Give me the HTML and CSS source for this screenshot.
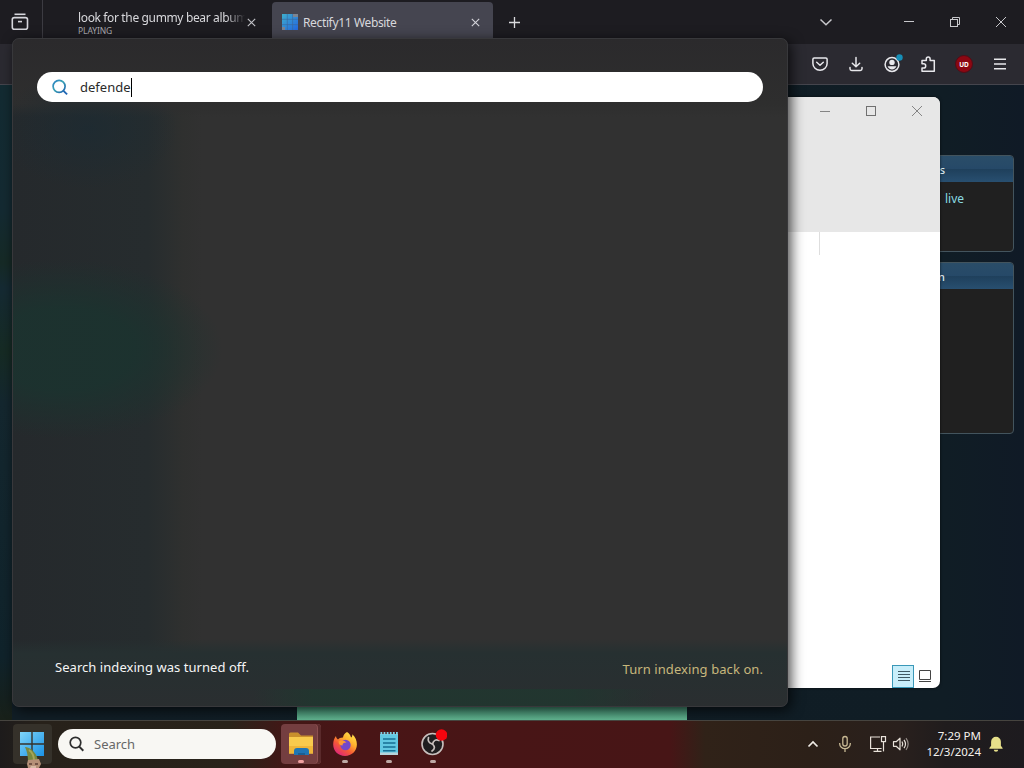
FILE: index.html
```
<!DOCTYPE html>
<html lang="en">
<head>
<meta charset="utf-8">
<title>Desktop</title>
<link rel="stylesheet" href="styles.css">
</head>
<body>
<main class="desktop">
  <section class="browser">
    <header class="tabs">
      <div class="history"><svg width="18" height="18" viewBox="0 0 18 18" fill="none" stroke="#d6d6dc" stroke-width="1.6"><path d="M3.5 1.3h11"/><rect x="1.3" y="4.6" width="15.2" height="11.6" rx="2"/><path d="M7 8.6h4"/></svg></div>
      <div class="tab media"><div class="tab-text"><span class="tab-title fade">look for the gummy bear album</span><span class="playing">PLAYING</span></div>
        <svg class="close" width="9" height="9" viewBox="0 0 9 9"><path d="M.8.8l7.4 7.4M8.2.8L.8 8.2" stroke="#c4c4ca" stroke-width="1.1"/></svg></div>
      <div class="tab active">
        <svg class="favicon" width="16" height="16" viewBox="0 0 16 16"><defs><linearGradient id="fav" x1="0" y1="0" x2="1" y2="1"><stop offset="0" stop-color="#3faecb"/><stop offset="1" stop-color="#2467e0"/></linearGradient></defs><rect width="16" height="16" fill="url(#fav)"/><path d="M0 5.3h16M0 10.6h16M5.3 0v16M10.6 0v16" stroke="#3d6698" stroke-width=".6"/><path d="M11 0h5v3h-5zM0 13h3v3H0z" fill="#7b8491"/></svg>
        <span class="tab-title">Rectify11 Website</span>
        <svg class="close" width="9" height="9" viewBox="0 0 9 9"><path d="M.8.8l7.4 7.4M8.2.8L.8 8.2" stroke="#d4d4da" stroke-width="1.1"/></svg></div>
      <svg class="plus" width="13" height="13" viewBox="0 0 13 13"><path d="M6.500 1v11M1 6.500h11" stroke="#dadade" stroke-width="1.300"/></svg>
      <div class="window-buttons">
        <svg width="14" height="14" viewBox="0 0 14 14" fill="none" stroke="#c8c8cc" stroke-width="1.500"><path d="M1.500 4.500L7 9.800l5.500-5.300"/></svg>
        <svg width="14" height="14" viewBox="0 0 14 14"><path d="M2 6.500h10" stroke="#c8c8cc"/></svg>
        <svg width="14" height="14" viewBox="0 0 14 14" fill="none" stroke="#c8c8cc"><rect x="2.500" y="4.500" width="7" height="7"/><path d="M4.500 4.500v-2h7v7h-2"/></svg>
        <svg width="14" height="14" viewBox="0 0 14 14"><path d="M2 2l10 10M12 2L2 12" stroke="#c8c8cc"/></svg>
      </div>
    </header>
    <nav class="toolbar">
      <svg width="18" height="18" viewBox="0 0 18 18" fill="none" stroke="#e8e8ec" stroke-width="1.500" stroke-linecap="round" stroke-linejoin="round"><path d="M3.200 3h11.600a1.300 1.300 0 0 1 1.300 1.300v4.200a7.100 6.700 0 0 1-14.200 0V4.300A1.300 1.300 0 0 1 3.200 3z"/><path d="M5.700 7.200L9 10.200l3.300-3"/></svg>
      <svg width="18" height="18" viewBox="0 0 18 18" fill="none" stroke="#e8e8ec" stroke-width="1.500" stroke-linecap="round" stroke-linejoin="round"><path d="M9 2.500v9M5.300 8.200L9 11.700l3.700-3.500M3 12.500v1.300a1.700 1.700 0 0 0 1.700 1.700h8.600a1.700 1.700 0 0 0 1.700-1.700v-1.300"/></svg>
      <svg class="account" width="18" height="18" viewBox="0 0 18 18"><circle cx="9" cy="9.500" r="6.900" fill="none" stroke="#e8e8ec" stroke-width="1.500"/><circle cx="9" cy="7.400" r="2.700" fill="#e8e8ec"/><path d="M4.600 11.300h8.800c-.6 2-2.400 3.200-4.400 3.200s-3.800-1.200-4.400-3.200z" fill="#e8e8ec"/><circle cx="16.500" cy="2.500" r="3.200" fill="#168fb8"/></svg>
      <svg width="18" height="18" viewBox="0 0 18 18" fill="none" stroke="#e8e8ec" stroke-width="1.500" stroke-linejoin="round"><path d="M3 16.300V13h1.600a2.100 2.100 0 0 0 0-4.200H3V5.500h4.300V4a1.900 1.900 0 0 1 3.800 0v1.500h4.200v10.800z"/></svg>
      <span class="blocker">UD</span>
      <svg width="18" height="18" viewBox="0 0 18 18"><path d="M3 4.300h12M3 9h12M3 13.700h12" stroke="#e8e8ec" stroke-width="1.400"/></svg>
    </nav>
    <div class="page">
      <aside class="side">
        <article class="card"><h2>s</h2><p>live</p></article>
        <article class="card tall"><h2>n</h2></article>
      </aside>
      <div class="banner"></div>
    </div>
  </section>

  <section class="explorer">
    <header class="explorer-head">
      <svg width="12" height="12" viewBox="0 0 12 12"><path d="M1 6.500h10" stroke="#858585"/></svg>
      <svg width="12" height="12" viewBox="0 0 12 12"><rect x="1.500" y="1.500" width="9" height="9" fill="none" stroke="#707070"/></svg>
      <svg width="12" height="12" viewBox="0 0 12 12"><path d="M1 1l10 10M11 1L1 11" stroke="#858585"/></svg>
    </header>
    <div class="explorer-body"><i class="divider"></i></div>
    <footer class="views">
      <span class="view-on"><svg width="14" height="12" viewBox="0 0 14 12"><path d="M1 1.500h12M1 4.500h12M1 7.500h12M1 10.500h12" stroke="#3f5964"/></svg></span>
      <svg width="14" height="14" viewBox="0 0 14 14"><path d="M1.500 1.500h11v9h-11zM1 12.500h12" fill="none" stroke="#444"/></svg>
    </footer>
  </section>

  <section class="start">
    <div class="query">
      <svg width="17" height="17" viewBox="0 0 17 17" fill="none"><defs><linearGradient id="lens" x1="0" y1="0" x2="1" y2="1"><stop offset="0" stop-color="#2a7fc4"/><stop offset=".45" stop-color="#3aa3b4"/><stop offset="1" stop-color="#1d5fae"/></linearGradient></defs><circle cx="7.100" cy="7.300" r="6" stroke="url(#lens)" stroke-width="1.700"/><path d="M11.500 11.800l3.600 3.600" stroke="#1f66b4" stroke-width="1.800"/></svg>
      <span class="typed">defende</span>
    </div>
    <footer class="notice"><span class="off">Search indexing was turned off.</span><a class="turn-on">Turn indexing back on.</a></footer>
  </section>

  <nav class="taskbar">
    <div class="start-button"><svg width="24" height="24" viewBox="0 0 24 24"><defs><linearGradient id="win" x1="0" y1="0" x2="1" y2="1"><stop offset="0" stop-color="#7fd5f8"/><stop offset="1" stop-color="#1b92e6"/></linearGradient></defs><path d="M0 0h11.300v11.300H0zM12.700 0H24v11.300H12.700zM0 12.700h11.300V24H0zM12.700 12.700H24V24H12.700z" fill="url(#win)"/></svg>
      <svg class="pointer" width="17" height="22" viewBox="0 0 17 22"><path d="M0 1c4 0 10 4 12 10l1 4-10 1c0-6-1-11-3-15z" fill="#78873f"/><path d="M4 4c3 2 5 6 5 11" stroke="#a5a558" stroke-width="2" fill="none"/><path d="M3 14l11-1 2 5-2 4H3l-1-4z" fill="#b59078"/><path d="M4 18h3M10 18h3" stroke="#5e3f37" stroke-width="1.500"/><path d="M6 20h5v2H5z" fill="#d6b9a4"/></svg></div>
    <div class="task-search"><svg width="16" height="16" viewBox="0 0 16 16" fill="none" stroke="#2e2e2e"><circle cx="6.500" cy="6.600" r="5.300" stroke-width="1.700"/><path d="M10.300 10.600l4 4.200" stroke-width="2"/></svg><span>Search</span></div>
    <div class="apps">
      <div class="app current"><svg width="28" height="28" viewBox="0 0 28 28"><path d="M2 5q0-1.500 1.500-1.500H11l3 3h12V12H2z" fill="#c98f2c"/><path d="M2 8h24v16.500H2z" fill="#f8ca4d"/><path d="M2 17h24v7.500H2z" fill="#efb538"/><path d="M7 26v-4q0-3 3-3h9q3 0 3 3v4z" fill="#2075b4"/><path d="M11 26v-2h7v2z" fill="#1a5f93"/></svg></div>
      <div class="app"><svg width="28" height="28" viewBox="0 0 28 28"><defs><linearGradient id="fox" x1=".85" y1=".05" x2=".2" y2=".95"><stop offset="0" stop-color="#ffe34c"/><stop offset=".35" stop-color="#ffb12e"/><stop offset=".65" stop-color="#f75b35"/><stop offset="1" stop-color="#df257c"/></linearGradient></defs><path d="M16 3c2 1 3.500 3 4 5.500 1.300-.8 1.500-2 1.300-3.300 3.200 3 4.600 6.500 4.600 10.300C25.900 22 20.700 27 14 27S2.200 22 2.200 15.500c0-3.500 1-6.500 2.800-8.500 0 1.500.8 2.700 2 3.500C8 9.300 9.500 8.500 12 8.500c.3-2.300 1.800-4.500 4-5.500z" fill="url(#fox)"/><circle cx="14.500" cy="16" r="5.200" fill="#7548c9"/><path d="M7.500 12.500c3-2 6-1 8 1-3 0-4 1-4 3-2 0-4-1-4-4z" fill="#ff9933"/></svg></div>
      <div class="app"><svg width="28" height="28" viewBox="0 0 28 28"><path d="M5 5h18v21H5z" fill="#62c8e2"/><path d="M5 23.500h18V26H5z" fill="#b7d3da"/><path d="M5.500 4.500h17.500" stroke="#7fd0e5" stroke-width="3" stroke-dasharray="1.800 1.300"/><path d="M8 10h12.500M8 14h12.500M8 18h12.500M8 21.800h12.500" stroke="#176f94" stroke-width="1.500"/></svg></div>
      <div class="app"><svg width="28" height="28" viewBox="0 0 28 28"><circle cx="13.500" cy="15" r="10.500" fill="#201e20" stroke="#c8bfbd" stroke-width="1.600"/><g fill="none" stroke="#c8bfbd" stroke-width="1.700" stroke-linecap="round"><path d="M13.500 15Q8 13.500 9.500 8.500"/><path d="M13.500 15q1.500-5.500 6.500-3.500"/><path d="M13.500 15q4 4-.5 7"/></g><circle cx="22.500" cy="6" r="5.800" fill="#f5050e"/></svg></div>
    </div>
    <div class="tray">
      <svg class="chevron" width="12" height="12" viewBox="0 0 12 12"><path d="M1.500 8.500L6 4l4.500 4.500" fill="none" stroke="#f0ece6" stroke-width="1.700"/></svg>
      <svg class="mic" width="14" height="18" viewBox="0 0 14 18" fill="none" stroke="#c8b994" stroke-width="1.300"><rect x="4.800" y="1.500" width="4.400" height="9.500" rx="2.200"/><path d="M1.700 8v.7a5.300 5 0 0 0 10.600 0V8M7 13.500V17"/></svg>
      <svg class="network" width="18" height="18" viewBox="0 0 18 18" fill="none" stroke="#e9e2da" stroke-width="1.200"><path d="M11 2H1.600v11.500h11M8.500 13.500v2.800M4.500 16.400h8"/><rect x="12.500" y="1.600" width="4" height="5"/><path d="M14.500 6.600v9.800"/></svg>
      <svg class="sound" width="18" height="16" viewBox="0 0 18 16" fill="none" stroke="#e9e2da" stroke-width="1.200" stroke-linejoin="round"><path d="M1.500 5.700h2.700L8 2.200v11.600l-3.800-3.500H1.500zM10 5.500q1.500 2.500 0 5M12 3.800q3 4.200 0 8.400"/><path d="M14 2.200q4.300 5.800 0 11.600" opacity=".55"/></svg>
      <div class="clock"><span>7:29 PM</span><span>12/3/2024</span></div>
      <svg class="bell" width="14" height="16" viewBox="0 0 14 16" fill="#e6df8a"><path d="M7 .8a4.900 4.900 0 0 1 4.900 4.900v4L13.600 12v.8H.4V12l1.700-2.300v-4A4.900 4.900 0 0 1 7 .8zM4.800 13.700h4.400a2.200 2 0 0 1-4.400 0z"/></svg>
    </div>
  </nav>
</main>
</body>
</html>
```
FILE: styles.css
```
* { box-sizing: border-box; }
body { margin: 0; font-family: "Noto Sans", sans-serif; }
svg { display: block; flex: none; }
.desktop { position: relative; width: 1024px; height: 768px; overflow: hidden; background: #111d25; }

.browser { position: absolute; inset: 0 0 48px 0; display: flex; flex-direction: column; }
.tabs { height: 44px; flex: none; display: flex; align-items: center; background: #1d1c21; }
.history { width: 43px; height: 44px; padding-left: 11px; display: flex; align-items: center; border-right: 1px solid #3c3b42; }
.tab { height: 36px; display: flex; align-items: center; border-radius: 4px; font-size: 12px; color: #d8d8dc; }
.media { width: 225px; margin-right: 4px; padding-left: 35px; }
.tab-text { width: 168px; display: flex; flex-direction: column; padding-top: 3px; }
.tab-title { white-space: nowrap; }
.fade { line-height: 14px; letter-spacing: -0.36px; -webkit-mask-image: linear-gradient(90deg, #000 148px, transparent 167px); mask-image: linear-gradient(90deg, #000 148px, transparent 167px); }
.playing { font-size: 8.500px; line-height: 12px; color: #aaaab0; letter-spacing: -0.1px; }
.media .close { margin-left: 1px; }
.active { width: 221px; height: 40px; padding-left: 10px; background: #454550; }
.favicon { margin-right: 5px; }
.active .tab-title { width: 168px; letter-spacing: -0.36px; }
.plus { margin-left: 15px; }
.window-buttons { margin-left: auto; width: 205px; display: grid; grid-template-columns: 83px 46px 46px 14px; }
.toolbar { height: 41px; flex: none; display: flex; align-items: center; justify-content: flex-end; gap: 18px; padding-right: 15px; background: #2b2a31; border-bottom: 1px solid #45454d; }
.account { overflow: visible; }
.blocker { width: 18px; height: 18px; display: flex; align-items: center; justify-content: center; border: 1px solid #500d17; border-radius: 50%; background: #8c0712; color: #fff; font-size: 6.500px; font-weight: 700; }
.page { position: relative; flex: 1; background: linear-gradient(90deg, #142a31 0, #111e26 12px, #101d25 945px, #101a26); }
.page::before { content: ""; position: absolute; inset: 0 auto 0 0; width: 12px; background: linear-gradient(#132b32, #142a32 20%, #162a26 28%, #152a33 32%, #162b24 42%, #14272f 50%, #10232b 90%, #182019); }
.side { width: 144px; margin-left: 870px; padding-top: 70px; display: flex; flex-direction: column; gap: 10px; }
.card { height: 97px; border: 1px solid #43545d; border-radius: 4px; overflow: hidden; background: #202020; text-align: right; }
.tall { height: 172px; }
.card h2 { height: 26px; margin: 0; padding-right: 68px; background: linear-gradient(#2a4d68, #264968 48%, #1f405c 52%, #284f70); color: #dceaf1; font-size: 11px; line-height: 28px; font-weight: 500; }
.card p { margin: 7px 49px 0; color: #8adbe2; font-size: 12px; line-height: 19px; }
.banner { position: absolute; left: 297px; bottom: 0; width: 390px; height: 13px; background: linear-gradient(#459275, #62b691); }

.explorer { position: absolute; left: 760px; top: 97px; width: 180px; height: 591px; display: flex; flex-direction: column; overflow: hidden; border-radius: 7px; background: #fff; box-shadow: 0 0 3px #000a; }
.explorer-head { height: 135px; flex: none; padding: 8px 17px; display: flex; justify-content: flex-end; gap: 34px; background: #e7e7e7; }
.explorer-body { flex: 1; padding-left: 59px; }
.divider { display: block; width: 1px; height: 23px; background: #dedede; }
.views { height: 24px; padding-right: 8px; display: flex; justify-content: flex-end; align-items: center; gap: 4px; }
.view-on { width: 22px; height: 23px; display: grid; place-items: center; border: 1px solid #3a98b8; background: #c8eefa; padding-left: 2px; }

.start { position: absolute; left: 12px; top: 38px; width: 776px; height: 669px; padding: 33px 24px 0; border: 1px solid #38383b; border-radius: 7px; display: flex; flex-direction: column; background: radial-gradient(ellipse 160px 90px at 50px 310px, #1b332fdd 45%, transparent), radial-gradient(ellipse 90px 60px at 75px 90px, #1b2b33aa, transparent), linear-gradient(transparent 600px, #263031 614px, #2a2e30), linear-gradient(#2b2a2c 0, #2e2e2e 65px, transparent 78px), linear-gradient(90deg, #25292c 0, #262c2e 135px, #2f302f 170px, #313131 190px); box-shadow: 3px 3px 13px #000b; }
.start::after { content: ""; position: absolute; left: 240px; right: 130px; bottom: 0; height: 17px; background: linear-gradient(90deg, transparent, #20372f 60px, #20372f 320px, transparent); opacity: .8; }
.query { height: 30px; flex: none; padding-left: 15px; display: flex; align-items: center; gap: 11px; border-radius: 15px; background: #fff; color: #2a2a2a; font-size: 13px; }
.typed { height: 19px; line-height: 19px; border-right: 1px solid #000; }
.notice { flex: 1; padding: 0 0 27px 18px; display: flex; justify-content: space-between; align-items: flex-end; line-height: 20px; font-size: 13px; letter-spacing: 0.05px; }
.off { margin-bottom: 2px; color: #f5f5f5; }
.turn-on { color: #c7b77c; letter-spacing: 0.08px; }

.taskbar { position: absolute; inset: auto 0 0; height: 48px; padding: 0 0 2px 13px; display: flex; align-items: center; border-top: 1px solid #46443f; background: linear-gradient(90deg, #1d1b1b 0, #27211a 40px, #29231a 230px, #421716 285px, #491516 350px, #471516 670px, #302218 705px, #2c2018 810px, #29201d 900px, #201c1d 945px, #1d1b1f); }
.start-button { position: relative; width: 39px; height: 40px; padding-right: 1px; display: grid; place-items: center; border-radius: 4px; background: #35312a; }
.pointer { position: absolute; left: 12px; top: 22px; }
.task-search { width: 218px; height: 30px; margin-left: 6px; padding-left: 11px; display: flex; align-items: center; gap: 9px; border-radius: 15px; background: #f8f7f3; color: #676767; font-size: 13px; }
.apps { margin-left: 5px; display: flex; gap: 4px; }
.app { width: 40px; height: 40px; position: relative; display: grid; place-items: center; border-radius: 4px; }
.app svg { margin-top: -2px; }
.app::after { content: ""; position: absolute; left: 17px; bottom: 1px; width: 6px; height: 3px; border-radius: 2px; background: #bea9a5; }
.current { background: #743e40; box-shadow: inset -3px 0 #5a2a2b, inset -4px 0 #8c5050; }
.current::after { background: #f0a0a0; }
.tray { margin-left: auto; padding-right: 21px; display: flex; align-items: center; }
.chevron { margin-right: 19px; }
.mic { margin-right: 17px; }
.network { margin-right: 5px; }
.sound { margin-right: 11px; }
.clock { width: 60px; margin-right: 8px; display: flex; flex-direction: column; align-items: flex-end; color: #f4f1ed; font-size: 11.500px; line-height: 16px; white-space: nowrap; }
```
